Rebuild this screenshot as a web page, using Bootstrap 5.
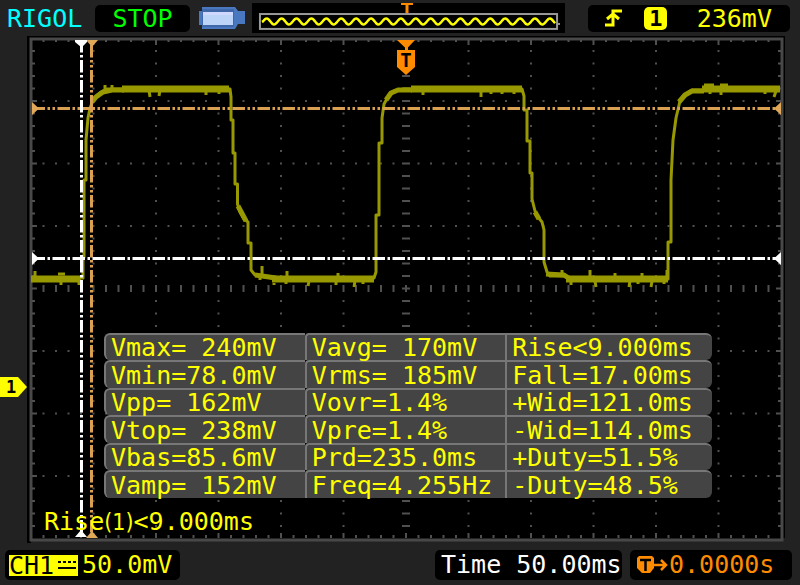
<!DOCTYPE html>
<html lang="en">
<head>
<meta charset="utf-8">
<meta name="viewport" content="width=device-width, initial-scale=1">
<title>RIGOL oscilloscope</title>
<link rel="stylesheet" href="https://cdn.jsdelivr.net/npm/bootstrap@5.3.0/dist/css/bootstrap.min.css">
<style>
  :root { --scope-bg: #222; --scope-yellow: #ff0; --scope-orange: #ff8c00; --scope-mono: "DejaVu Sans Mono", monospace; }
  body { background: var(--scope-bg); color: var(--scope-yellow); font-family: var(--scope-mono); font-size: 25px; line-height: 27px; }
  svg { display: block; }
  .scope-head { height: 36px; padding: 0 10px 0 7px; }
  .readout { background: #000; border-radius: 5px; white-space: nowrap; height: 27px; }
  .readout.tall { height: 30px; line-height: 30px; }
  .brand { color: #0ff; width: 88px; }
  .run-state { color: #0f0; width: 95px; }
  .battery { width: 48px; margin: 0 6px 0 8px; }
  .overview { background: #000; height: 30px; margin-right: 23px; }
  .trig { width: 202px; padding: 0 18px 0 17px; }
  .trig-source { background: var(--scope-yellow); color: #000; border-radius: 5px; width: 23px; height: 23px; line-height: 24px; font-size: 22px; font-weight: 700; }
  .scope-grid text { font-family: var(--scope-mono); font-weight: 700; }
  .measure-box { left: 13%; right: 11%; top: 297px; }
  .measure-box table { table-layout: fixed; border-collapse: separate; border-spacing: 0; width: 100%; }
  .measure-box tr { height: 28px; }
  .measure-box tr:nth-child(odd) { height: 27px; }
  .measure-box td { background: #444; border-top: 2px solid #777; border-left: 2px solid #777; border-radius: 4px 0 0 0; padding: 0 0 0 5px; line-height: 25px; white-space: nowrap; }
  .measure-box td:first-child { border-radius: 6px 0 0 6px; }
  .measure-box td:last-child { border-radius: 0 6px 6px 0; }
  .col-a, .col-b { width: 33%; }
  .stat-line { left: 44px; bottom: 8px; white-space: nowrap; }
  .stat-index { font-family: "DejaVu Sans Condensed", "DejaVu Sans", sans-serif; font-size: 23px; }
  .scope-foot { padding: 6px 8px 5px 5px; }
  .chan { width: 175px; padding-left: 4px; }
  .chan-tag { background: var(--scope-yellow); color: #000; height: 21px; line-height: 21px; width: 69px; }
  .timebase { color: #fff; width: 187px; padding-left: 6px; }
  .delay { color: var(--scope-orange); width: 162px; padding-left: 7px; }
</style>
<script src="https://cdn.jsdelivr.net/npm/bootstrap@5.3.0/dist/js/bootstrap.bundle.min.js"></script>
</head>
<body>
<header class="scope-head d-flex align-items-center">
  <div class="brand flex-shrink-0">RIGOL</div>
  <div class="readout run-state flex-shrink-0 text-center">STOP</div>
  <svg class="battery flex-shrink-0" height="24" viewBox="0 0 48 24" aria-label="Battery">
    <path d="M4 1H37L40 5H47V18H40L37 23H4V19H1V5H4Z" fill="#4a78c0"/>
    <path d="M4 3H36V21H4Z" fill="#4068a8"/>
    <rect x="5" y="6" width="30" height="13" fill="#bcd4f8"/>
    <path d="M5 6H35V9H5Z" fill="#d0d8ff"/>
  </svg>
  <div class="overview flex-grow-1">
    <svg width="100%" height="30" viewBox="0 0 315 30" aria-label="Memory overview">
      <rect x="8" y="11" width="299" height="15" fill="none" stroke="#999" stroke-width="2"/>
      <path id="wave" fill="none" stroke="#ff0" stroke-width="2.500"/>
      <path d="M307 21H310" stroke="#999" stroke-width="2"/>
      <path d="M150 0H162V2H157.500V10H154.500V2H150Z" fill="#ff8c00"/>
    </svg>
  </div>
  <div class="readout trig d-flex align-items-center justify-content-between flex-shrink-0">
    <svg width="18" height="20" viewBox="0 0 18 20" aria-label="Rising edge"><path d="M0 17H8V3H17M2 11L8 6L14 11" fill="none" stroke="#ff0" stroke-width="3"/></svg>
    <span class="trig-source text-center">1</span>
    <span class="ms-2">236mV</span>
  </div>
</header>

<main class="position-relative">
  <svg class="scope-grid w-100" viewBox="0 36 800 508" aria-label="Channel 1 waveform">
    <path fill="#000" d="M27 35H785V538H31V543H27Z"/>
    <rect x="31" y="39" width="751" height="501" fill="#000" stroke="#484848" stroke-width="3"/>
    <g id="grid" stroke="#505050" stroke-width="2" fill="none"></g>
    <g fill="none" stroke="#989800" stroke-linejoin="round">
      <path stroke-width="3" d="M81 278H83V257H84V180H86V140L88 118L90 108L94 98L101 92L107 89H230L231 97V120H233V153H235V184H237.500V204L240 212L244 219L248 222V243H251V270L255 275L262 276L272 278H374L376 272V215H379V143H382V118L384 104L388 97L394 91L404 89H522L524 96V110H527V141H530V173H532V199L535 211L538 217L542 222L544 230V262L547 272L550 276H564L570 279H668V242H671V180L673 140L676 118L680 101L684 95L692 90H780"/>
      <path stroke-width="7" stroke-linejoin="miter" d="M31 279H81M122 89H229M272 279H374M411 89H522M566 279H668M702 89H780"/>
      <path stroke-width="5" d="M92 102L96 97L103 92L112 90H124M255 275L262 276L276 278M386 100L391 93L398 90H412M535 212L539 219M546 274L564 275L570 279M679 102L685 95L692 91H704M238 206L246 221"/>
      <path stroke-width="3" d="M35 271V276M58 274H65M61 280V285M79 280V285M105 85V90M112 85V88M149 90L150 97M160 90L159 96M206 90V95M219 90V94M262 266V276M260 276V280M274 283V285M287 271V277M286 281V284M309 281L308 286M338 273V278M336 281V285M355 281L354 287M363 281V284M423 91V95M481 91V97M491 91V94M502 91V94M514 91V94M562 270V276M590 270V277M595 281L596 287M571 281V285M615 273V277M630 281L629 287M638 281V284M642 273V277M652 281L651 287M664 281V284M667 270V277M710 90V94M721 90V95M765 90V94M776 91L774 97M704 85H714M720 85H728"/>
    </g>
    <g fill="none" stroke="#d8a050" stroke-width="3" stroke-dasharray="12.500 2.500 2.500 2.500 2.500 2.500">
      <path d="M32.500 108.500H781"/><path d="M91.500 45V535"/>
    </g>
    <g fill="none" stroke="#fff" stroke-width="3" stroke-dasharray="12.500 2.500 2.500 2.500">
      <path d="M32.500 258.500H781"/><path d="M81.500 40V535"/>
    </g>
    <path fill="#e0a858" d="M32 102L39 108.500L32 115ZM781 102L774 108.500L781 115ZM86 40H98L92 47ZM86 538H98L92 531Z"/>
    <path fill="#fff" d="M32 252L39 258.500L32 265ZM781 252L774 258.500L781 265ZM75 40H87V42L82 47H81L75 42ZM75 537H87L81 530Z"/>
    <path fill="#ff8c00" d="M397 40H415L406.500 49ZM397 50H415V67L406 75L397 67ZM405 47H408V51H405Z"/>
    <text x="406" y="67" text-anchor="middle" font-size="19" fill="#000">T</text>
    <path fill="#ff0" d="M0 377H18L27 387L18 397H0Z"/>
    <text x="11" y="393" text-anchor="middle" font-size="17" fill="#000">1</text>
  </svg>

  <div class="measure-box position-absolute">
    <table aria-label="Measurements">
      <colgroup><col class="col-a"><col class="col-b"><col></colgroup>
      <tbody>
        <tr><td>Vmax= 240mV</td><td>Vavg= 170mV</td><td>Rise&lt;9.000ms</td></tr>
        <tr><td>Vmin=78.0mV</td><td>Vrms= 185mV</td><td>Fall=17.00ms</td></tr>
        <tr><td>Vpp= 162mV</td><td>Vovr=1.4%</td><td>+Wid=121.0ms</td></tr>
        <tr><td>Vtop= 238mV</td><td>Vpre=1.4%</td><td>-Wid=114.0ms</td></tr>
        <tr><td>Vbas=85.6mV</td><td>Prd=235.0ms</td><td>+Duty=51.5%</td></tr>
        <tr><td>Vamp= 152mV</td><td>Freq=4.255Hz</td><td>-Duty=48.5%</td></tr>
      </tbody>
    </table>
  </div>
  <div class="stat-line position-absolute">Rise<span class="stat-index">(1)</span>&lt;9.000ms</div>
</main>

<footer class="scope-foot d-flex">
  <div class="readout tall chan d-flex align-items-center me-auto">
    <span class="chan-tag d-flex align-items-center flex-shrink-0"><span>CH1</span><svg class="ms-1" width="18" height="12" viewBox="0 0 18 12" aria-label="DC coupling"><path d="M0 3H18" stroke="#000" stroke-width="2" stroke-dasharray="3 2"/><path d="M0 9H18" stroke="#000" stroke-width="2"/></svg></span>
    <span class="ms-1">50.0mV</span>
  </div>
  <div class="readout tall timebase me-2">Time 50.00ms</div>
  <div class="readout tall delay d-flex align-items-center">
    <svg class="flex-shrink-0" width="32" height="20" viewBox="0 0 32 20" aria-label="Trigger delay">
      <path d="M2 1H15L17 3V13L13 18H5L0 13V3Z" fill="#ff8c00"/>
      <path d="M3 5H14M8.500 5V16" stroke="#000" stroke-width="2.500" fill="none"/>
      <path d="M17 10H29M24 5L29 10L24 15" stroke="#ff8c00" stroke-width="2.500" fill="none"/>
    </svg>
    <span>0.0000s</span>
  </div>
</footer>

<script>
  // Graticule: 12 x 8 divisions, five dots per division.
  const X = 31, Y = 38.5, STEP = 12.5, COLS = 60, ROWS = 40;
  let d = "";
  for (let i = 1; i < COLS; i++) {
    const x = X + i * STEP, major = i % 5 === 0;
    d += `M${x} 40V${major ? 45 : 42}M${x} 538V${major ? 533 : 535}M${x} 285V292`;
    for (let j = 1; j < ROWS; j++) {
      if (j !== 20 && (major || j % 5 === 0)) {
        const y = Y + j * STEP, w = i === 30 ? 4 : 1;
        d += `M${x - w} ${y}H${x + w}`;
      }
    }
  }
  for (let j = 1; j < ROWS; j++) {
    const y = Y + j * STEP, w = j % 5 === 0 ? 5 : 3;
    d += `M32 ${y}h${w}M781 ${y}h-${w}`;
  }
  d += "M402 288.5H410";
  document.getElementById("grid").innerHTML = `<path d="${d}"/>`;

  // Miniature of the stored trace: one cycle every 15 units.
  let w = "M10 19";
  for (let x = 11; x <= 305; x++) w += `L${x} ${(18.5 - 3 * Math.sin((x - 11) * 2 * Math.PI / 15)).toFixed(1)}`;
  document.getElementById("wave").setAttribute("d", w);
</script>
</body>
</html>
